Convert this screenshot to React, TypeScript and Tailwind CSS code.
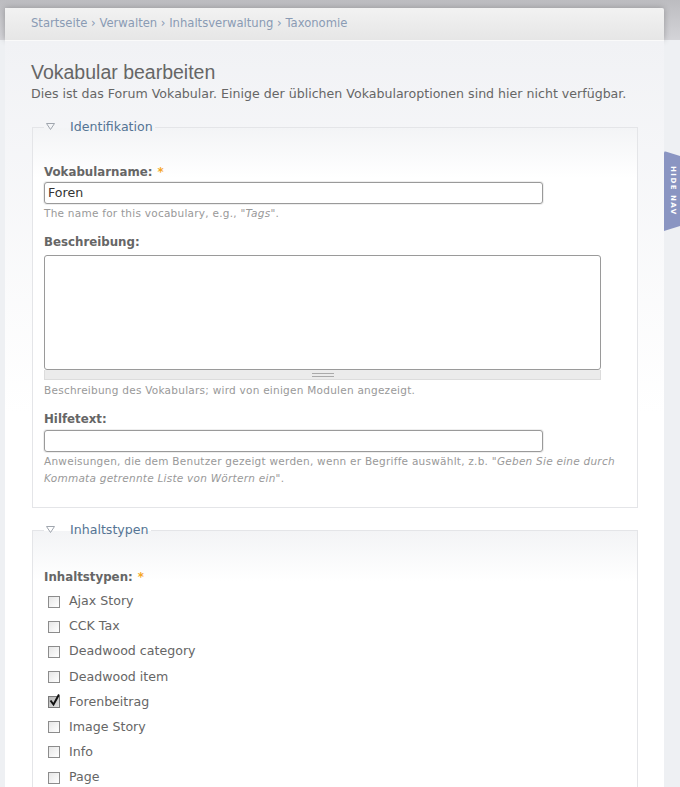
import React from "react";

const types = [
  { name: "Ajax Story", checked: false },
  { name: "CCK Tax", checked: false },
  { name: "Deadwood category", checked: false },
  { name: "Deadwood item", checked: false },
  { name: "Forenbeitrag", checked: true },
  { name: "Image Story", checked: false },
  { name: "Info", checked: false },
  { name: "Page", checked: false },
];

const Req = () => <span className="ml-[5px] text-[#f5a623]">*</span>;

const Legend = ({ title }: { title: string }) => (
  <legend className="px-[2px] flex items-center gap-[15px] text-[12.6px] leading-[16px] text-[#557494]">
    <svg width="9" height="7" viewBox="0 0 9 7" className="mt-[-2px]">
      <path d="M0.5 0.5 H8.5 L4.5 6.5 Z" fill="none" stroke="#a0a6ae" strokeWidth="1" />
    </svg>
    <span>{title}</span>
  </legend>
);

const CheckBox = ({ checked }: { checked: boolean }) => (
  <span
    className={
      checked
        ? "relative w-[12px] h-[12px] border border-[#7a7a7a] bg-gradient-to-br from-[#b8b8b8] to-[#e0e0e0] shrink-0"
        : "relative w-[12px] h-[12px] border border-[#8c8c8c] bg-gradient-to-br from-[#e6e6e6] to-white shrink-0"
    }
  >
    {checked && (
      <svg width="14" height="14" viewBox="0 0 14 14" className="absolute left-[-1px] top-[-4px]">
        <path d="M2.5 7.5 L5.5 11.5 L11 1.5" fill="none" stroke="#111" strokeWidth="2" />
      </svg>
    )}
  </span>
);

export default function App() {
  return (
    <div className="relative w-[680px] h-[787px] overflow-hidden bg-[#eef0f3] font-['DejaVu_Sans',sans-serif]">
      {/* top band */}
      <div className="h-[40px] bg-gradient-to-b from-[#bcbcc0] to-[#d4d4d8] pt-[8px] pl-[5px] pr-[16px]">
        <div className="h-[32px] bg-gradient-to-b from-[#f2f2f2] to-[#e6e6e6] rounded-tr-[2px] shadow-[0_0_6px_rgba(0,0,0,0.25)] flex items-center pl-[26px] text-[11.6px] text-[#8a9bb4]">
          Startseite › Verwalten › Inhaltsverwaltung › Taxonomie
        </div>
      </div>

      <div className="ml-[5px] mr-[16px] h-[747px] bg-gradient-to-b from-[#f1f2f5] via-white to-white px-[26px] pt-[19px] border-t border-[#fafafa]">
        <h1 className="font-['Liberation_Sans',sans-serif] text-[19.5px] leading-[24px] text-[#666]">
          Vokabular bearbeiten
        </h1>
        <p className="mt-[1px] text-[12.6px] leading-[18px] text-[#666]">
          Dies ist das Forum Vokabular. Einige der üblichen Vokabularoptionen sind hier nicht verfügbar.
        </p>

        <fieldset className="mt-[16px] ml-[1px] border border-[#e4e5e8] bg-gradient-to-b from-[#f3f4f6] to-white to-[50px] px-[11px] pb-[20px]">
          <Legend title="Identifikation" />
          <div className="pt-[29px]">
            <label className="block text-[11.8px] leading-[16px] font-bold text-[#666]">
              Vokabularname:<Req />
            </label>
            <div className="mt-[2px] w-[499px] h-[22px] border border-[#9a9a9a] rounded-[3px] bg-white flex items-center px-[3px] text-[12.6px] text-[#333] shadow-[0_0_0_1px_#eeeeee]">
              Foren
            </div>
            <p className="mt-[1px] text-[10.5px] tracking-[0.25px] leading-[17px] text-[#999]">
              The name for this vocabulary, e.g., <em>"Tags"</em>.
            </p>

            <label className="block mt-[12px] text-[11.8px] leading-[16px] font-bold text-[#666]">
              Beschreibung:
            </label>
            <div className="mt-[5px] w-[557px]">
              <div className="h-[115px] border border-[#9a9a9a] rounded-[3px] bg-white" />
              <div className="h-[10px] bg-[#ebebeb] border border-t-0 border-[#dcdcdc] flex items-center justify-center">
                <div className="w-[22px] h-[4px] border-y border-[#aaa]" />
              </div>
            </div>
            <p className="mt-[2px] text-[10.5px] tracking-[0.25px] leading-[17px] text-[#999]">
              Beschreibung des Vokabulars; wird von einigen Modulen angezeigt.
            </p>

            <label className="block mt-[12px] text-[11.8px] leading-[16px] font-bold text-[#666]">
              Hilfetext:
            </label>
            <div className="mt-[3px] w-[499px] h-[22px] border border-[#9a9a9a] rounded-[3px] bg-white shadow-[0_0_0_1px_#eeeeee]" />
            <p className="mt-[1px] text-[10.5px] tracking-[0.25px] leading-[17px] text-[#999]">
              Anweisungen, die dem Benutzer gezeigt werden, wenn er Begriffe auswählt, z.b.{" "}
              <em>"Geben Sie eine durch Kommata getrennte Liste von Wörtern ein"</em>.
            </p>
          </div>
        </fieldset>

        <fieldset className="mt-[14px] ml-[1px] border border-[#e4e5e8] bg-gradient-to-b from-[#f3f4f6] to-white to-[50px] px-[11px] pb-[19px]">
          <Legend title="Inhaltstypen" />
          <div className="pt-[31px]">
            <label className="block text-[11.8px] leading-[16px] font-bold text-[#666]">
              Inhaltstypen:<Req />
            </label>
            <div className="mt-[4px] flex flex-col">
              {types.map((t) => (
                <div key={t.name} className="flex items-center h-[25.15px] pl-[4px] gap-[9px] text-[12.6px] text-[#666]">
                  <CheckBox checked={t.checked} />
                  <span>{t.name}</span>
                </div>
              ))}
            </div>
          </div>
        </fieldset>
      </div>

      {/* hide nav tab */}
      <div className="absolute right-0 top-[151px] w-[16px] h-[80px] bg-[#8a95c2] rounded-tl-[2px] [clip-path:polygon(0_0,100%_5px,100%_calc(100%-5px),0_100%)] flex items-center justify-center">
        <span className="[writing-mode:vertical-rl] text-[7px] font-bold tracking-[1.5px] text-white leading-none">
          HIDE NAV
        </span>
      </div>
    </div>
  );
}
